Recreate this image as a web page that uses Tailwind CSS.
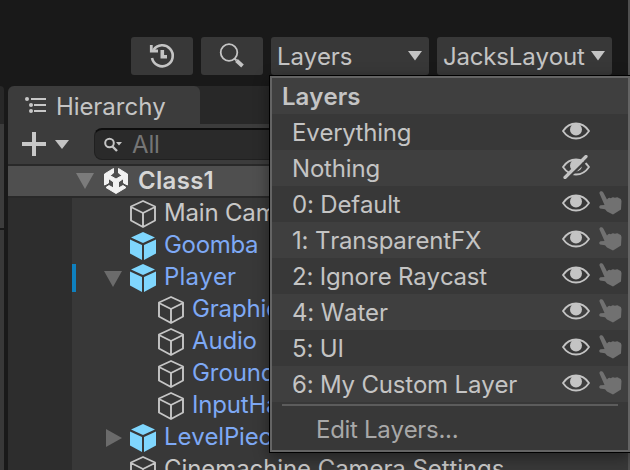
<!DOCTYPE html>
<html lang="en">
<head>
<meta charset="utf-8">
<title>Editor</title>
<script src="https://cdn.jsdelivr.net/npm/@tailwindcss/browser@4"></script>
</head>
<body class="relative w-[630px] h-[470px] overflow-hidden bg-[#191919] font-['Inter',sans-serif] text-[24px] leading-[32px] tracking-[-0.18px] [font-kerning:none] text-[#c4c4c4] whitespace-nowrap">
<svg class="hidden">
  <symbol id="cube" viewBox="0 0 28 30"><path d="M14 2 26 7.5V21.500L14 28 2 21.500V7.500ZM2 8 14 14 26 8M14 14V28" fill="none" stroke="#c6c6c6" stroke-width="1.900" stroke-linejoin="round"/></symbol>
  <symbol id="prefab" viewBox="0 0 28 30"><path d="M14 1 26 6.500 14 12 2 6.500ZM1 8.500 13 14V29L1 22.500ZM27 8.500 15 14V29L27 22.500Z" fill="#7fd6fd"/></symbol>
  <symbol id="eye" viewBox="0 0 28 18"><path d="M1 9Q6 1.500 14 1.500T27 9Q22 16.500 14 16.500T1 9Z" fill="none" stroke="#c4c4c4" stroke-width="1.800"/><circle cx="14" cy="7.500" r="6" fill="#c4c4c4"/></symbol>
  <symbol id="hand" viewBox="0 0 24 24"><path d="M0.500 2.500C0 0 3.200-0.500 4.300 1.500L8 8.500Q9.500 6 12 7.300 13.500 5.300 16 6.800 18.500 5.300 20 7.200 22.300 7 22.500 10L22 18.500 14 23.500 8 20.500 6 18.200 1 17.500Q-0.800 15.500 1.500 14.200L5.500 14Z" fill="#717171"/></symbol>
</svg>

<div class="flex h-[86px] pt-[37px] pl-[131px]">
  <div class="flex gap-2">
    <div class="w-[62px] h-[38px] rounded-[3px] bg-[#383838] pt-[6px] pl-[18px]">
      <svg width="26" height="26" viewBox="0 0 26 26" fill="none" stroke="#c4c4c4" stroke-width="2.600"><path d="M4.500 7A10.500 10.500 0 1 1 3 15"/><path d="M2.300 2V8H9" stroke-width="2.800"/><path d="M13.300 7V13.700H18" stroke-width="3.600"/></svg>
    </div>
    <div class="w-[62px] h-[38px] rounded-[3px] bg-[#383838] pt-[6px] pl-[18px]">
      <svg width="26" height="26" viewBox="0 0 26 26" fill="none" stroke="#c4c4c4"><circle cx="10" cy="9.500" r="8.300" stroke-width="1.800"/><path d="m15.500 15.500 2 2" stroke-width="2"/><path d="m17.500 17.500 6 5.500" stroke-width="3.800"/></svg>
    </div>
    <div class="flex items-center justify-between w-[158px] h-[38px] rounded-[3px] bg-[#383838] pl-[6px] pr-[7px]">
      <span class="pt-px">Layers</span><svg width="14" height="10" viewBox="0 0 14 10"><path d="M0 0H14L7 9.500Z" fill="#c4c4c4"/></svg>
    </div>
    <div class="flex items-center justify-between w-[175px] h-[38px] rounded-[3px] bg-[#383838] pl-[6px] pr-[7px]">
      <span class="pt-px">JacksLayout</span><svg width="14" height="10" viewBox="0 0 14 10"><path d="M0 0H14L7 9.500Z" fill="#c4c4c4"/></svg>
    </div>
  </div>
</div>

<div class="flex h-[384px]">
  <div class="w-[4px] mr-[4px] shrink-0">
    <div class="h-[38px] bg-[#282828] rounded-tr"></div>
    <div class="h-[104px] bg-[#3c3c3c]"></div>
    <div class="h-[242px] mt-[2px] bg-[#383838]"></div>
  </div>
  <div class="grow overflow-hidden bg-[#383838] rounded-tl-md">
    <div class="flex h-[38px] bg-[#282828]">
      <div class="flex items-center w-[192px] rounded-t-md bg-[#3c3c3c] pl-[17px] pt-[3px]">
        <svg class="mb-[3px]" width="22" height="18" viewBox="0 0 22 18"><g fill="#c8c8c8"><circle cx="2" cy="3" r="2"/><circle cx="6" cy="9" r="2"/><circle cx="6" cy="15" r="2"/><path d="M6 2H21V4H6ZM9 8H21V10H9ZM9 14H21V16H9Z"/></g></svg>
        <span class="ml-[9px] tracking-[-0.1px]">Hierarchy</span>
      </div>
    </div>
    <div class="flex h-[40px] bg-[#3c3c3c] pl-[14px]">
      <svg class="mt-[8px]" width="24" height="24" viewBox="0 0 24 24"><path d="M12 0V24M0 12H24" stroke="#c8c8c8" stroke-width="4"/></svg>
      <svg class="mt-[16px] ml-[9px]" width="14" height="9" viewBox="0 0 14 9"><path d="M0 0H14L7 9Z" fill="#c4c4c4"/></svg>
      <div class="flex items-center w-[500px] h-[32px] mt-[4px] ml-[25px] rounded-[8px] border border-[#202020] border-t-2 border-t-[#0e0e0e] bg-[#2a2a2a] pl-[9px] text-[#757575]">
        <svg width="20" height="16" viewBox="0 0 20 16" fill="none" stroke="#c4c4c4"><circle cx="5.500" cy="6" r="4.300" stroke-width="2"/><path d="m8.500 9.500 4.500 4.500" stroke-width="2.400"/><path d="M12 5H18L15 8.500Z" fill="#c4c4c4" stroke="none"/></svg>
        <span class="ml-[8px]">All</span>
      </div>
    </div>
    <div class="flex items-center h-[34px] border-y-2 border-[#292929] bg-[#4f4f4f] pl-[68px] font-semibold text-[#d6d6d6]">
      <svg width="18" height="16" viewBox="0 0 18 16"><path d="M0 0H18L9 16Z" fill="#7b7b7b"/></svg>
      <svg class="ml-[9px]" width="26" height="28" viewBox="0 0 26 28"><path d="M10.500 1.500V6L7 8.500 13 12 19 8.500 15.500 6V1.500L24.500 7V18L20.500 16V11.500L15.500 15V21L20 18.500 23 20.500 13 26.500 3 20.500 6 18.500 10.500 21V15L5.500 11.500V16L1.500 18V7Z" fill="#f2f2f2" stroke="#f2f2f2"/></svg>
      <span class="ml-[9px] tracking-[0.3px]">Class1</span>
    </div>
    <div class="flex h-[272px]">
      <div class="w-[64px] shrink-0 bg-[#2d2d2d]"></div>
      <div class="grow text-[#7ea9f5] -mt-px">
        <div class="flex h-[32px] pl-[57px] text-[#c8c8c8]"><svg class="w-[28px] h-[30px] mt-[2px] shrink-0"><use href="#cube"/></svg><span class="ml-[7px]">Main Camera</span></div>
        <div class="flex h-[32px] pl-[57px]"><svg class="w-[28px] h-[30px] mt-[2px] shrink-0"><use href="#prefab"/></svg><span class="ml-[7px] tracking-[-0.3px]">Goomba</span></div>
        <div class="flex h-[32px]"><div class="w-[4px] h-[28px] mt-[3px] bg-[#0f80be]"></div><svg class="mt-[10px] ml-[28px]" width="18" height="16" viewBox="0 0 18 16"><path d="M0 0H18L9 16Z" fill="#6b6b6b"/></svg><svg class="w-[28px] h-[30px] mt-[2px] ml-[7px] shrink-0"><use href="#prefab"/></svg><span class="ml-[7px] tracking-[0.2px]">Player</span></div>
        <div class="flex h-[32px] pl-[85px]"><svg class="w-[28px] h-[30px] mt-[2px] shrink-0"><use href="#cube"/></svg><span class="ml-[7px]">Graphics</span></div>
        <div class="flex h-[32px] pl-[85px]"><svg class="w-[28px] h-[30px] mt-[2px] shrink-0"><use href="#cube"/></svg><span class="ml-[7px]">Audio</span></div>
        <div class="flex h-[32px] pl-[85px]"><svg class="w-[28px] h-[30px] mt-[2px] shrink-0"><use href="#cube"/></svg><span class="ml-[7px]">GroundCheck</span></div>
        <div class="flex h-[32px] pl-[85px]"><svg class="w-[28px] h-[30px] mt-[2px] shrink-0"><use href="#cube"/></svg><span class="ml-[7px]">InputHandler</span></div>
        <div class="flex h-[32px] pl-[34px]"><svg class="mt-[8px]" width="16" height="18" viewBox="0 0 16 18"><path d="M0 0V18L16 9Z" fill="#6b6b6b"/></svg><svg class="w-[28px] h-[30px] mt-[2px] ml-[7px] shrink-0"><use href="#prefab"/></svg><span class="ml-[7px]">LevelPieces</span></div>
        <div class="flex h-[32px] pl-[57px] text-[#c8c8c8]"><svg class="w-[28px] h-[30px] mt-[2px] shrink-0"><use href="#cube"/></svg><span class="ml-[7px] tracking-[-0.08px]">Cinemachine Camera Settings</span></div>
      </div>
    </div>
  </div>
</div>

<div class="absolute right-0 top-0 w-[2px] h-[470px] bg-[#505050]"></div>

<div class="absolute left-[269px] top-[75px] w-[361px] h-[378px] border border-r-0 border-black shadow-[0_4px_14px_rgba(0,0,0,0.4)]">
  <div class="h-[376px] border-2 border-[#646464] bg-[#383838]">
    <div class="flex items-center h-[36px] pt-[2px] pl-[10px] bg-[#3f3f3f] font-semibold tracking-[0px]">Layers</div>
    <div class="flex items-center h-[36px] pl-[20px] pr-[38px] justify-between"><span class="pt-[2px]">Everything</span><svg class="w-[28px] h-[18px] -mt-[3px]"><use href="#eye"/></svg></div>
    <div class="flex items-center h-[36px] pl-[20px] pr-[38px] justify-between bg-[#3f3f3f]"><span class="pt-[2px]">Nothing</span><svg class="w-[28px] h-[24px] -mt-[3px]" viewBox="0 0 28 24"><use href="#eye" y="3" width="28" height="18"/><path d="M5 24 27 3" stroke="#3f3f3f" stroke-width="2.500"/><path d="M3 22.500 24 1.500" stroke="#c4c4c4" stroke-width="3.200" stroke-linecap="round"/></svg></div>
    <div class="flex items-center h-[36px] pl-[20px] pr-[5px]"><span class="grow pt-[2px]">0: Default</span><svg class="w-[28px] h-[18px] -mt-[3px]"><use href="#eye"/></svg><svg class="w-[24px] h-[24px] ml-[9px] -mt-[3px]"><use href="#hand"/></svg></div>
    <div class="flex items-center h-[36px] pl-[20px] pr-[5px] bg-[#3f3f3f]"><span class="grow pt-[2px]">1: TransparentFX</span><svg class="w-[28px] h-[18px] -mt-[3px]"><use href="#eye"/></svg><svg class="w-[24px] h-[24px] ml-[9px] -mt-[3px]"><use href="#hand"/></svg></div>
    <div class="flex items-center h-[36px] pl-[20px] pr-[5px]"><span class="grow pt-[2px]">2: Ignore Raycast</span><svg class="w-[28px] h-[18px] -mt-[3px]"><use href="#eye"/></svg><svg class="w-[24px] h-[24px] ml-[9px] -mt-[3px]"><use href="#hand"/></svg></div>
    <div class="flex items-center h-[36px] pl-[20px] pr-[5px] bg-[#3f3f3f]"><span class="grow pt-[2px]">4: Water</span><svg class="w-[28px] h-[18px] -mt-[3px]"><use href="#eye"/></svg><svg class="w-[24px] h-[24px] ml-[9px] -mt-[3px]"><use href="#hand"/></svg></div>
    <div class="flex items-center h-[36px] pl-[20px] pr-[5px]"><span class="grow pt-[2px]">5: UI</span><svg class="w-[28px] h-[18px] -mt-[3px]"><use href="#eye"/></svg><svg class="w-[24px] h-[24px] ml-[9px] -mt-[3px]"><use href="#hand"/></svg></div>
    <div class="flex items-center h-[36px] pl-[20px] pr-[5px] bg-[#3f3f3f]"><span class="grow pt-[2px]">6: My Custom Layer</span><svg class="w-[28px] h-[18px] -mt-[3px]"><use href="#eye"/></svg><svg class="w-[24px] h-[24px] ml-[9px] -mt-[3px]"><use href="#hand"/></svg></div>
    <div class="h-[2px] mt-[2px] ml-[10px] mr-[10px] bg-[#5c5c5c]"></div>
    <div class="pt-[8px] pl-[44px] text-[#a8a8a8] tracking-[-0.3px]">Edit Layers...</div>
  </div>
</div>
</body>
</html>
